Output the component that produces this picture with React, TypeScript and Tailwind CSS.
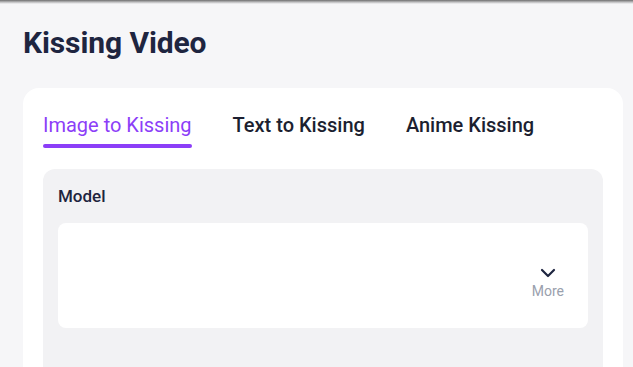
export default function App() {
  const tabs = ['Image to Kissing', 'Text to Kissing', 'Anime Kissing']
  const active = 0

  return (
    <div className="relative min-h-screen bg-[#f6f6f8] pl-[23px] pr-[10px] font-['Roboto',sans-serif] overflow-hidden">
      <div className="absolute left-0 right-0 top-0 h-[4px] bg-gradient-to-b from-[#6f6f6f] via-[#b9b9bb] to-transparent" />
      <h1 className="pt-[24px] text-[30px] leading-[38px] font-bold text-[#1e2540] tracking-[-0.1px]">Kissing Video</h1>
      <div className="mt-[26px] rounded-[16px] bg-white px-[20px] pt-[22px] pb-[40px]">
        <div className="flex gap-[41px]">
          {tabs.map((t, i) => (
            <div key={t} className="flex flex-col">
              <span className={`text-[20px] leading-[30px] ${i === active ? 'font-normal text-[#8c3ef8]' : 'font-medium text-[#1c1f30]'}`}>{t}</span>
              <span className={`mt-[4px] h-[4px] rounded-full ${i === active ? 'bg-[#8c3ef8]' : 'bg-transparent'}`} />
            </div>
          ))}
        </div>
        <div className="mt-[21px] rounded-[12px] bg-[#f2f2f4] px-[15px] pt-[14px] pb-[60px]">
          <div className="text-[17px] leading-[26px] font-medium text-[#1e2540]">Model</div>
          <div className="mt-[14px] flex h-[105px] items-start justify-end rounded-[8px] bg-white pr-[24px] pt-[45px]">
            <div className="flex flex-col items-center">
              <svg width="16" height="10" viewBox="0 0 16 10" fill="none">
                <path d="M2 2l6 6 6-6" stroke="#1e2540" strokeWidth="2.2" strokeLinecap="round" strokeLinejoin="round" />
              </svg>
              <span className="mt-[4px] text-[14px] leading-[18px] text-[#9aa0ad]">More</span>
            </div>
          </div>
        </div>
      </div>
    </div>
  )
}
